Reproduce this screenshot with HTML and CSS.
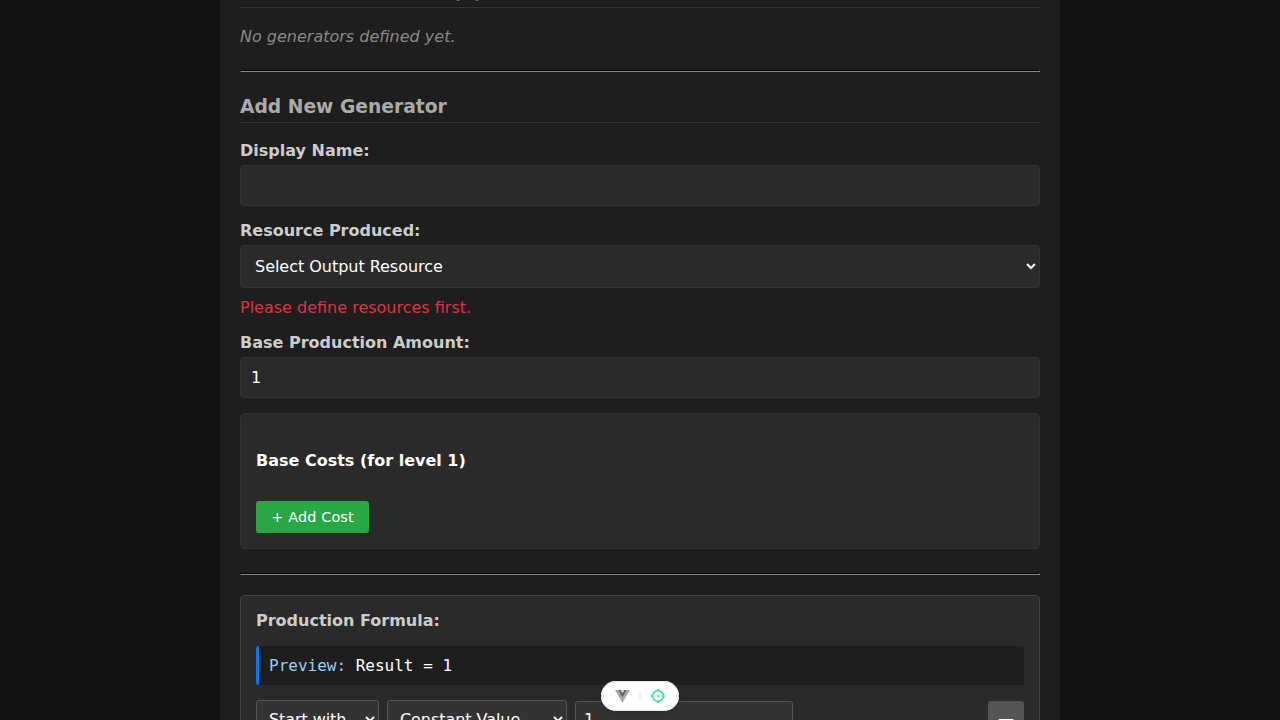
FILE: index.html
```html
<!DOCTYPE html>
<html lang="en">
<head>
<meta charset="utf-8">
<title>Generators</title>
<link rel="stylesheet" href="styles.css">
</head>
<body>
<main class="panel">
  <h3 class="heading heading-first">Defined Generators (0)</h3>
  <p class="empty">No generators defined yet.</p>
  <hr class="rule">
  <h3 class="heading">Add New Generator</h3>
  <form class="form">
    <div class="field">
      <label class="label" for="name">Display Name:</label>
      <input class="input" id="name" type="text">
    </div>
    <div class="field">
      <label class="label" for="resource">Resource Produced:</label>
      <select class="input select" id="resource"><option>Select Output Resource</option></select>
      <p class="error">Please define resources first.</p>
    </div>
    <div class="field">
      <label class="label" for="amount">Base Production Amount:</label>
      <input class="input" id="amount" type="number" value="1">
    </div>
    <section class="costs">
      <h4 class="costs-title">Base Costs (for level 1)</h4>
      <button class="add" type="button">+ Add Cost</button>
    </section>
    <hr class="rule rule-form">
    <section class="formula">
      <div class="label formula-label">Production Formula:</div>
      <div class="preview"><span class="preview-key">Preview:</span> Result = 1</div>
      <div class="step">
        <select class="control operation"><option>Start with</option></select>
        <select class="control kind"><option>Constant Value</option></select>
        <input class="control value" type="number" value="1">
        <button class="remove" type="button">—</button>
      </div>
    </section>
  </form>
</main>
<div class="devtools">
  <svg class="vue" viewBox="0 0 256 221" width="15" height="13"><path fill="#a8a8a8" d="M0 0h51l77 132L204 0h52L128 221z"/><path fill="#666" d="M51 0h47l30 52 30-52h46l-76 132z"/><path fill="#ccc" d="M98 0h60l-30 52z"/></svg>
  <span class="divider"></span>
  <svg class="target" viewBox="0 0 24 24" width="16" height="16" fill="none" stroke="#42e3a0" stroke-width="2.6"><circle cx="12" cy="12" r="8"/><path d="M12 1v4M12 19v4M1 12h4M19 12h4"/><circle cx="12" cy="12" r="1.8" fill="#42e3a0" stroke="none"/></svg>
</div>
</body>
</html>
```
FILE: styles.css
```css
* { box-sizing: border-box; }
html { height: 100%; overflow: hidden; }
body {
  margin: 0;
  height: 720px;
  overflow: hidden;
  background: #121212;
  color: #fff;
  font: 16px/19px "DejaVu Sans", sans-serif;
}
input, select, button { font-family: inherit; color: #fff; margin: 0; }
input::-webkit-inner-spin-button { display: none; }
.panel {
  width: 840px;
  height: 720px;
  overflow: hidden;
  margin: 0 auto;
  padding: 0 20px;
  background: #1e1e1e;
  display: flow-root;
}
.heading {
  margin: 0 0 18px;
  height: 28px;
  padding: 1px 0 4px;
  border-bottom: 1px solid #333;
  color: #aaa;
  font-size: 18.72px;
  line-height: 22px;
}
.heading-first { margin: -20px 0 19px; }
.empty { margin: 0 0 24px; color: #888; font-style: italic; }
.rule {
  height: 2px;
  margin: 0 0 23px;
  border: 1px solid;
  border-color: #000 #868686 #868686 #000;
}
.field { margin-bottom: 15px; }
.label { display: block; margin-bottom: 5px; color: #ccc; font-weight: bold; }
.input {
  display: block;
  width: 100%;
  height: 41px;
  padding: 10px;
  border: 1px solid #333;
  border-radius: 4px;
  background: #2a2a2a;
  font-size: 16px;
}
.select { height: 43px; letter-spacing: -.03px; }
.error { margin: 10px 0 16px; color: #dc3545; }
.costs {
  height: 136px;
  padding: 37px 15px 15px;
  border: 1px solid #333;
  border-radius: 5px;
  background: #2a2a2a;
}
.costs-title { margin: 0 0 31px; font-size: 16px; }
.add {
  display: block;
  width: 113px;
  height: 32px;
  padding: 0;
  border: 0;
  border-radius: 3px;
  background: #28a745;
  font-size: 14.4px;
  letter-spacing: .15px;
}
.rule-form { margin: 24px 0 20px; }
.formula {
  height: 180px;
  padding: 15px;
  border: 1px solid #444;
  border-radius: 5px;
  background: #2a2a2a;
}
.formula-label { margin-bottom: 16px; }
.preview {
  height: 39px;
  margin-bottom: 15px;
  padding: 10px;
  border-left: 3px solid #007bff;
  border-radius: 3px;
  background: #1e1e1e;
  font-family: "DejaVu Sans Mono", monospace;
}
.preview-key { color: #9acfff; }
.step { display: flex; align-items: center; gap: 8px; }
.control {
  height: 37px;
  padding: 8px;
  border: 1px solid #555;
  border-radius: 3px;
  background: #333;
  font-size: 16px;
}
.operation { width: 123px; height: 39px; letter-spacing: -.08px; }
.kind { width: 180px; height: 39px; letter-spacing: -.05px; }
.value { width: 218px; }
.remove {
  width: 36px;
  height: 37px;
  margin-left: auto;
  padding: 0 0 3px;
  border: 0;
  border-radius: 3px;
  background: #555;
  font-size: 16px;
}
.devtools {
  position: absolute;
  left: 601px;
  top: 681px;
  width: 78px;
  height: 30px;
  padding: 0 12.6px 0 14px;
  display: flex;
  align-items: center;
  justify-content: space-between;
  border-radius: 15px;
  background: #fff;
  box-shadow: 0 2px 8px rgba(0, 0, 0, .15), inset 0 0 0 1px #e4e4e4;
}
.vue, .target { display: block; }
.divider { width: 2px; height: 10px; margin-right: 1px; background: #f0f0f0; }
```
